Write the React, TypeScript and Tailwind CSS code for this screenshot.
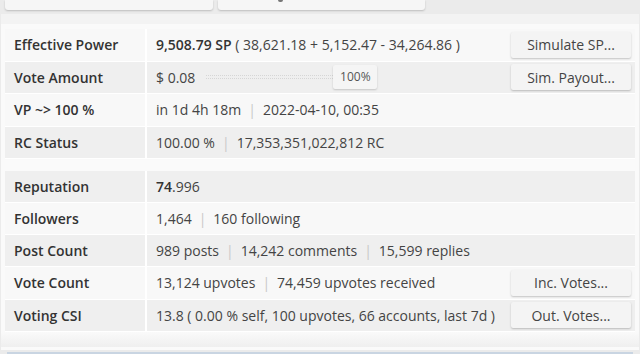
import React from "react";

const Sep = () => <span className="mx-[7px] text-[#c8c8c8]">|</span>;

const Btn = ({ children }: { children: React.ReactNode }) => (
  <div className="flex h-[26px] w-[120px] items-center justify-center rounded-[2px] bg-[#f4f4f4] text-[14px] text-[#444] shadow-[0_1px_2px_rgba(0,0,0,0.22)]">
    {children}
  </div>
);

type RowProps = {
  label: string;
  gray?: boolean;
  h: string;
  children: React.ReactNode;
  btn?: string;
};

const Row = ({ label, gray, h, children, btn }: RowProps) => (
  <div className={`flex ${h} border-b border-white ${gray ? "bg-[#efefef]" : "bg-[#f8f8f8]"}`}>
    <div className="flex w-[142px] shrink-0 items-center border-r-2 border-white pl-[9px] font-semibold text-[#333]">
      {label}
    </div>
    <div className="flex flex-1 items-center justify-between pl-[9px] pr-[4px] text-[#444]">
      <div className="flex items-center whitespace-nowrap">{children}</div>
      {btn && <Btn>{btn}</Btn>}
    </div>
  </div>
);

export default function App() {
  return (
    <div
      className="h-[354px] w-[640px] overflow-hidden bg-[#ebebeb] text-[14px]"
      style={{ fontFamily: '"Open Sans", "Noto Sans", sans-serif' }}
    >
      {/* top buttons (cut off) */}
      <div className="flex h-[14px] items-start gap-[5px] pl-[5px]">
        <div className="h-[10px] w-[208px] rounded-b-[3px] bg-[#f6f6f6] shadow-[0_1px_2px_rgba(0,0,0,0.2)]" />
        <div className="relative h-[10px] w-[207px] rounded-b-[3px] bg-[#f6f6f6] shadow-[0_1px_2px_rgba(0,0,0,0.2)]">
          <div className="absolute left-[60px] top-0 h-[2px] w-[5px] rounded-b bg-[#777]" />
        </div>
      </div>
      <div className="mx-[1px] bg-[#fafafa] pb-[3px]">
        <div className="h-[10px] bg-[#f3f3f3]" />
        <div className="h-[5px]" />
        <div className="px-[4px]">
          <Row label="Effective Power" h="h-[32.5px]" btn="Simulate SP...">
            <span className="font-semibold text-[#333]">9,508.79 SP</span>
            <span>&nbsp;( 38,621.18 + 5,152.47 - 34,264.86 )</span>
          </Row>
          <Row label="Vote Amount" gray h="h-[32.5px]" btn="Sim. Payout...">
            <span>$ 0.08</span>
            <div className="ml-[11px] h-[4px] w-[127px] border-y border-dotted border-[#d6d6d6]" />
            <div className="flex h-[24px] w-[44px] items-center justify-center rounded-[2px] bg-[#f5f5f5] text-[12px] text-[#555] shadow-[0_1px_2px_rgba(0,0,0,0.18)]">
              100%
            </div>
          </Row>
          <Row label="VP ~> 100 %" h="h-[32.5px]">
            <span>in 1d 4h 18m</span>
            <Sep />
            <span>2022-04-10, 00:35</span>
          </Row>
          <Row label="RC Status" gray h="h-[32.5px]">
            <span>100.00 %</span>
            <Sep />
            <span>17,353,351,022,812 RC</span>
          </Row>
          <div className="h-[12px]" />
          <Row label="Reputation" gray h="h-[32px]">
            <span className="font-semibold text-[#333]">74</span>
            <span>.996</span>
          </Row>
          <Row label="Followers" h="h-[32px]">
            <span>1,464</span>
            <Sep />
            <span>160 following</span>
          </Row>
          <Row label="Post Count" gray h="h-[32px]">
            <span>989 posts</span>
            <Sep />
            <span>14,242 comments</span>
            <Sep />
            <span>15,599 replies</span>
          </Row>
          <Row label="Vote Count" h="h-[32.5px]" btn="Inc. Votes...">
            <span>13,124 upvotes</span>
            <Sep />
            <span>74,459 upvotes received</span>
          </Row>
          <Row label="Voting CSI" gray h="h-[32.5px]" btn="Out. Votes...">
            <span>13.8 ( 0.00 % self, 100 upvotes, 66 accounts, last 7d )</span>
          </Row>
        </div>
        <div className="h-[15px] bg-gradient-to-b from-[#fafafa] to-[#efefef]" />
      </div>
      <div className="mx-[7px] mt-[2px] h-[4px] border-t-2 border-[#c9d5e2] bg-[#e4e9ee]" />
    </div>
  );
}
